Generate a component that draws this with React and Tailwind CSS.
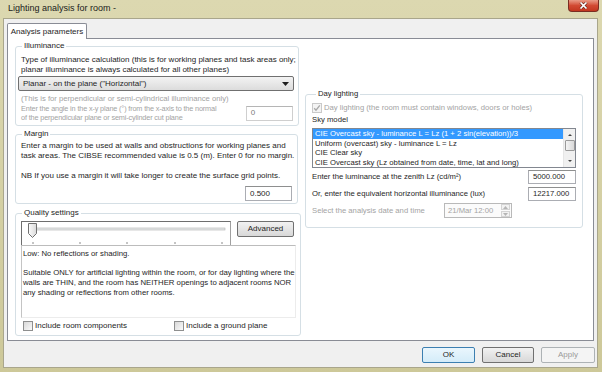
import React from 'react';

function GroupBox({ title, className, children }) {
  return (
    <fieldset className={`border border-[#d5dfe5] rounded-[3px] ${className}`}>
      <legend className="ml-[4px] px-[2px] leading-[10px]">{title}</legend>
      {children}
    </fieldset>
  );
}

function TextBox({ value, className }) {
  return (
    <div className={`bg-white border border-[#abadb3] border-t-[#8e8f8f] flex items-center pl-[4px] ${className}`}>
      {value}
    </div>
  );
}

function CheckBox({ checked, disabled }) {
  return (
    <span
      className={`w-[10px] h-[10px] shrink-0 border flex items-center justify-center ${
        disabled ? 'border-[#c9c9c9] bg-[#f4f4f4]' : 'border-[#8e8f8f] bg-linear-to-br from-[#d8d8d8] to-[#fafafa]'
      }`}
    >
      {checked && (
        <svg width="8" height="8" viewBox="0 0 8 8">
          <path d="M1.2 4.2 L3 6.2 L6.8 1.4" fill="none" stroke={disabled ? '#a8a8a8' : '#333'} strokeWidth="1.3" />
        </svg>
      )}
    </span>
  );
}

function Button({ children, variant, className }) {
  const styles = {
    default: 'border-[#3c7fb1] bg-linear-to-b from-[#eaf6fd] to-[#d4ecf9] text-[#1e1e1e]',
    normal: 'border-[#707070] bg-linear-to-b from-[#f2f2f2] to-[#d8d8d8] text-[#1e1e1e]',
    disabled: 'border-[#adb2b5] bg-[#f4f4f4] text-[#9a9a9a]',
  };
  return (
    <div className={`h-[16px] rounded-[2px] border flex items-center justify-center ${styles[variant]} ${className}`}>
      {children}
    </div>
  );
}

function Trackbar() {
  const ticks = [11, 58, 105, 153, 200];
  return (
    <div className="w-[210px] h-[24px] border-t border-l border-r border-t-[#6e6e6e] border-l-[#6e6e6e] border-r-[#a0a0a0] bg-white">
      <svg width="208" height="23" viewBox="0 0 208 23">
        <rect x="10" y="6" width="193" height="2" fill="#e7eaea" stroke="#b0b0b0" strokeWidth="0.6" />
        {ticks.map((t) => (
          <line key={t} x1={t} y1="20" x2={t} y2="22" stroke="#8a8a8a" strokeWidth="1" />
        ))}
        <defs>
          <linearGradient id="thumb" x1="0" y1="0" x2="1" y2="0">
            <stop offset="0" stopColor="#fbfbfb" />
            <stop offset="1" stopColor="#dadada" />
          </linearGradient>
        </defs>
        <path d="M6.5 1.5 H14.5 V11.5 L10.5 15.5 L6.5 11.5 Z" fill="url(#thumb)" stroke="#707070" strokeWidth="1" />
      </svg>
    </div>
  );
}

const skyModels = [
  'CIE Overcast sky - luminance L = Lz (1 + 2 sin(elevation))/3',
  'Uniform (overcast) sky - luminance L = Lz',
  'CIE Clear sky',
  'CIE Overcast sky (Lz obtained from date, time, lat and long)',
];

function SkyList() {
  return (
    <div className="mt-[3px] h-[40px] border border-[#828790] bg-white flex">
      <div className="flex-1 flex flex-col overflow-hidden">
        {skyModels.map((m, i) => (
          <div
            key={m}
            className={`h-[9.5px] leading-[9.5px] pl-[2px] whitespace-nowrap ${i === 0 ? 'bg-[#3399ff] text-white' : ''}`}
          >
            {m}
          </div>
        ))}
      </div>
      <div className="w-[12px] bg-[#f0f0f0] border-l border-[#e6e6e6] flex flex-col items-center">
        <svg width="12" height="8" viewBox="0 0 12 8" className="mt-[2px]">
          <path d="M4 5 L6 3 L8 5 Z" fill="#444" />
        </svg>
        <div className="w-[10px] h-[11px] mt-[1px] rounded-[1px] border border-[#9a9a9a] bg-linear-to-r from-[#f4f4f4] to-[#d9d9d9]" />
        <svg width="12" height="8" viewBox="0 0 12 8" className="mt-auto mb-[2px]">
          <path d="M4 3 L6 5 L8 3 Z" fill="#444" />
        </svg>
      </div>
    </div>
  );
}

function DatePicker() {
  return (
    <div className="w-[68px] h-[15px] border border-[#b9b9b9] bg-[#fbfbfb] flex items-center text-[#a3a3a3]">
      <span className="pl-[3px] flex-1 whitespace-nowrap">21/Mar 12:00</span>
      <div className="w-[9px] h-[13px] mr-[1px] flex flex-col gap-[1px]">
        <div className="flex-1 border border-[#d4d4d4] bg-[#f2f2f2] flex items-center justify-center">
          <svg width="5" height="3" viewBox="0 0 5 3"><path d="M0 3 L2.5 0 L5 3 Z" fill="#b5b5b5" /></svg>
        </div>
        <div className="flex-1 border border-[#d4d4d4] bg-[#f2f2f2] flex items-center justify-center">
          <svg width="5" height="3" viewBox="0 0 5 3"><path d="M0 0 L2.5 3 L5 0 Z" fill="#b5b5b5" /></svg>
        </div>
      </div>
    </div>
  );
}

export default function App() {
  return (
    <div className="w-[602px] h-[372px] flex flex-col overflow-hidden bg-linear-to-b from-[#dcd8b0] to-[#cdc899] font-['Liberation_Sans',Arial,sans-serif] text-[8px] text-[#1e1e1e]">
      <div className="h-[18px] shrink-0 relative flex items-center pl-[8px] text-[9px] text-[#1b1b1b]">
        Lighting analysis for room -
        <div className="absolute right-[3px] top-0 w-[31px] h-[12px] rounded-b-[4px] border border-t-0 border-[#7a2d22] bg-linear-to-b from-[#e89a86] via-[#d24a33] to-[#c2361f] flex items-center justify-center">
          <svg width="9" height="7" viewBox="0 0 9 7">
            <path d="M1.5 0.5 L7.5 6.5 M7.5 0.5 L1.5 6.5" stroke="#5a1e16" strokeWidth="2.8" />
            <path d="M1.5 0.5 L7.5 6.5 M7.5 0.5 L1.5 6.5" stroke="#ffffff" strokeWidth="1.7" />
          </svg>
        </div>
      </div>

      <div className="flex-1 ml-[3px] mr-[4px] mb-[4px] border border-[#a9a68c] bg-[#f0f0f0] flex flex-col pt-[4px] px-[3px] pb-[4px]">
        <div className="flex shrink-0">
          <div className="relative z-10 -mb-px h-[16px] w-[80px] bg-white border border-b-0 border-[#898c95] rounded-t-[2px] flex items-center justify-center whitespace-nowrap">
            Analysis parameters
          </div>
        </div>

        <div className="flex-1 border border-[#898c95] bg-white flex gap-[7px] pl-[7px] pt-[2px]">
          <div className="w-[283px] flex flex-col">
            <GroupBox title="Illuminance" className="h-[85px] px-[2px]">
              <div className="mt-[4px] pl-[3px] leading-[10px] whitespace-nowrap">
                <div>Type of illuminance calculation (this is for working planes and task areas only;</div>
                <div>planar illuminance is always calculated for all other planes)</div>
              </div>
              <div className="mt-[1px] mr-[2px] h-[15px] rounded-[2px] border border-[#707070] bg-linear-to-b from-[#f3f3f3] to-[#dcdcdc] flex items-center justify-between pl-[4px] pr-[4px]">
                <span>Planar - on the plane ("Horizontal")</span>
                <svg width="7" height="4" viewBox="0 0 7 4">
                  <path d="M0 0 L7 0 L3.5 4 Z" fill="#1e1e1e" />
                </svg>
              </div>
              <div className="mt-[3px] pl-[3px] leading-[9.5px] text-[#a3a3a3] text-[7.7px] whitespace-nowrap">
                (This is for perpendicular or semi-cylindrical illuminance only)
              </div>
              <div className="pl-[3px] pr-[3px] flex items-center justify-between">
                <div className="leading-[9.5px] text-[#a3a3a3] text-[7.3px] tracking-[-0.15px] whitespace-nowrap">
                  <div>Enter the angle in the x-y plane (°) from the x-axis to the normal</div>
                  <div>of the perpendicular plane or semi-cylinder cut plane</div>
                </div>
                <TextBox value="0" className="w-[47px] h-[15px] border-[#cfcfcf] border-t-[#b5b5b5] text-[#7a7a7a]" />
              </div>
            </GroupBox>

            <GroupBox title="Margin" className="mt-[3px] h-[75px] px-[2px]">
              <div className="mt-[2px] pl-[3px] leading-[10px] whitespace-nowrap">
                <div>Enter a margin to be used at walls and obstructions for working planes and</div>
                <div>task areas. The CIBSE recommended value is 0.5 (m). Enter 0 for no margin.</div>
                <div className="h-[10px]" />
                <div>NB If you use a margin it will take longer to create the surface grid points.</div>
              </div>
              <div className="mt-[5px] pr-[3px] flex justify-end">
                <TextBox value="0.500" className="w-[47px] h-[15px]" />
              </div>
            </GroupBox>

            <GroupBox title="Quality settings" className="mt-[4px] h-[128px] px-[2px]">
              <div className="mt-[3px] pl-[3px] flex items-start">
                <Trackbar />
                <Button variant="normal" className="ml-[6px] w-[57px]">Advanced</Button>
              </div>
              <div className="ml-[3px] mr-[2px] h-[73px] border border-t-[#bcbcbc] border-l-[#c4c4c4] border-r-[#ececec] border-b-[#ececec] pl-[1px] pt-[3px] leading-[10px] text-[7.75px] whitespace-nowrap overflow-hidden">
                <div>Low: No reflections or shading.</div>
                <div className="h-[9px]" />
                <div>Suitable ONLY for artificial lighting within the room, or for day lighting where the</div>
                <div className="leading-[9.5px]">walls are THIN, and the room has NEITHER openings to adjacent rooms NOR</div>
                <div className="leading-[9.5px]">any shading or reflections from other rooms.</div>
              </div>
              <div className="mt-[2px] pl-[5px] flex items-center h-[12px]">
                <div className="w-[151px] flex items-center gap-[2px]">
                  <CheckBox />
                  <span>Include room components</span>
                </div>
                <div className="flex items-center gap-[2px]">
                  <CheckBox />
                  <span>Include a ground plane</span>
                </div>
              </div>
            </GroupBox>
          </div>

          <div className="w-[278px] pt-[48px] text-[7.7px]">
            <GroupBox title="Day lighting" className="h-[139px] px-[6px]">
              <div className="mt-[4px] h-[10px] flex items-center gap-[2px] text-[#a3a3a3] whitespace-nowrap">
                <CheckBox checked disabled />
                <span>Day lighting (the room must contain windows, doors or holes)</span>
              </div>
              <div className="mt-[2px] leading-[10px]">Sky model</div>
              <SkyList />
              <div className="mt-[2px] h-[14px] flex items-center justify-between">
                <span>Enter the luminance at the zenith Lz (cd/m²)</span>
                <TextBox value="5000.000" className="w-[48px] h-[14px]" />
              </div>
              <div className="mt-[3px] h-[14px] flex items-center justify-between">
                <span>Or, enter the equivalent horizontal illuminance (lux)</span>
                <TextBox value="12217.000" className="w-[48px] h-[14px]" />
              </div>
              <div className="mt-[2px] h-[15px] flex items-center">
                <span className="w-[132px] text-[#a3a3a3]">Select the analysis date and time</span>
                <DatePicker />
              </div>
            </GroupBox>
          </div>
        </div>

        <div className="mt-[6px] -mr-[1px] flex justify-end gap-[7px] shrink-0">
          <Button variant="default" className="w-[53px] h-[15px]">OK</Button>
          <Button variant="normal" className="w-[52px] h-[15px]">Cancel</Button>
          <Button variant="disabled" className="w-[54px] h-[15px]">Apply</Button>
        </div>
      </div>
    </div>
  );
}
